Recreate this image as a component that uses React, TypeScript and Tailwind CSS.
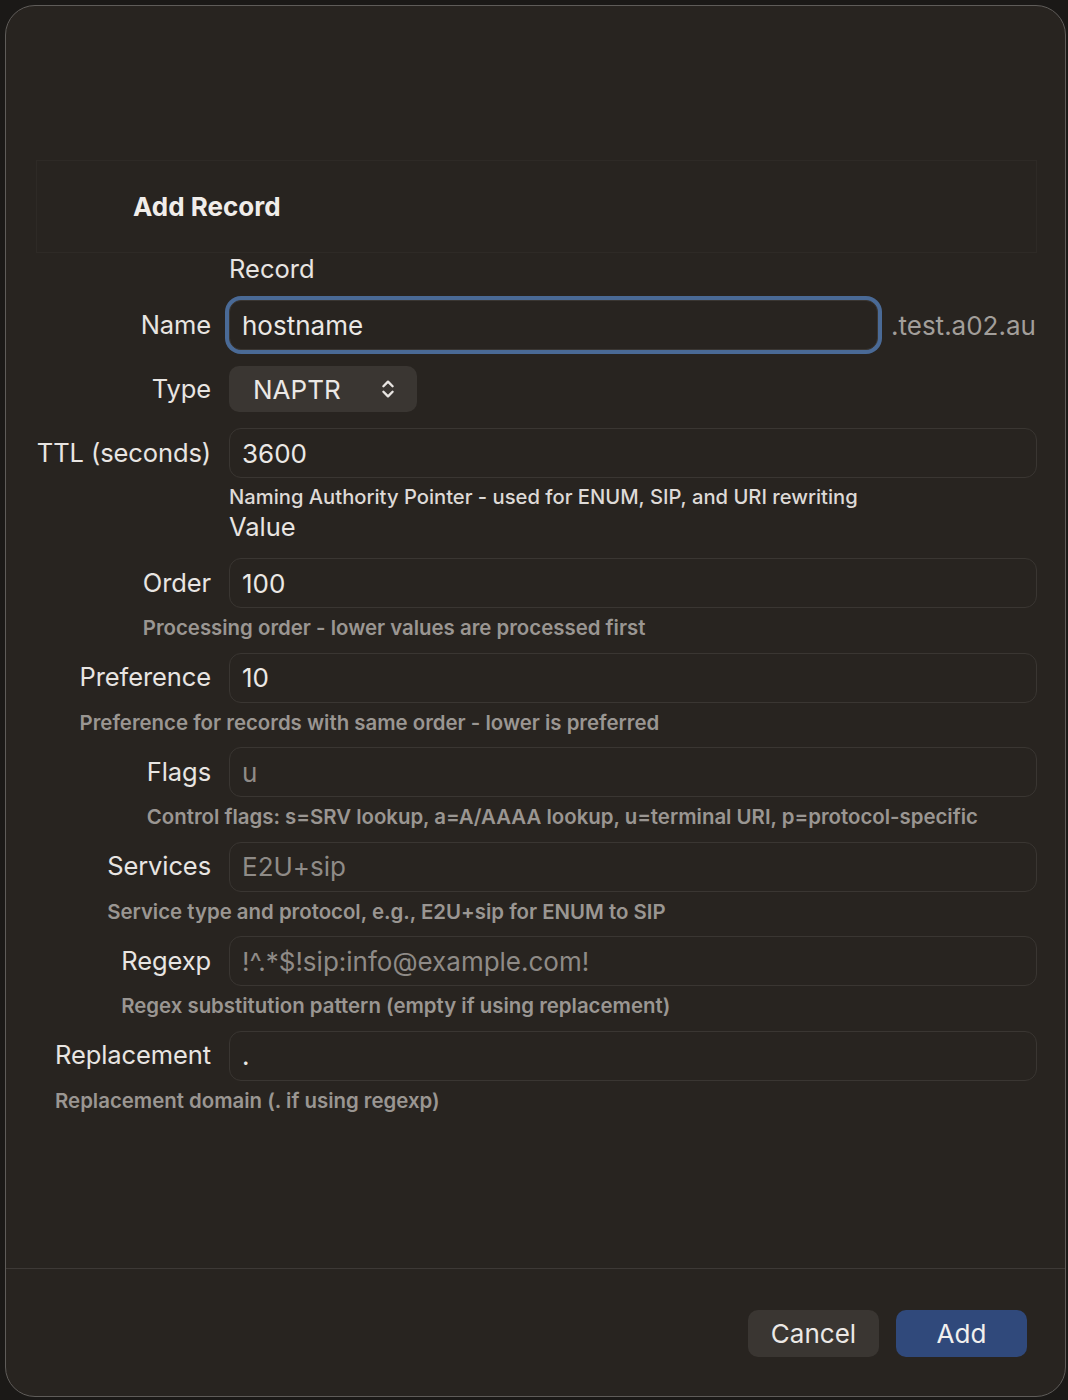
import { ChevronsUpDown } from "lucide-react";

const font = { fontFamily: "Inter, 'Noto Sans', sans-serif" };

type Field = {
  label: string;
  value?: string;
  placeholder?: string;
  help: string;
};

const valueFields: Field[] = [
  { label: "Order", value: "100", help: "Processing order - lower values are processed first" },
  { label: "Preference", value: "10", help: "Preference for records with same order - lower is preferred" },
  { label: "Flags", placeholder: "u", help: "Control flags: s=SRV lookup, a=A/AAAA lookup, u=terminal URI, p=protocol-specific" },
  { label: "Services", placeholder: "E2U+sip", help: "Service type and protocol, e.g., E2U+sip for ENUM to SIP" },
  { label: "Regexp", placeholder: "!^.*$!sip:info@example.com!", help: "Regex substitution pattern (empty if using replacement)" },
  { label: "Replacement", value: ".", help: "Replacement domain (. if using regexp)" },
];

function TextBox({ value, placeholder }: { value?: string; placeholder?: string }) {
  return (
    <div className="h-[50px] w-full rounded-[12px] border border-[#3a3632] bg-[#282420] pl-[12px] flex items-center text-[26px]">
      {value ? (
        <span className="text-[#ebe8e5]">{value}</span>
      ) : (
        <span className="text-[#8f8b87]">{placeholder}</span>
      )}
    </div>
  );
}

function Row({ label, children, h = 50 }: { label: string; children: React.ReactNode; h?: number }) {
  return (
    <div className="flex gap-[18px]">
      <div className="w-[175px] shrink-0 flex justify-end">
        <div
          className={`${h === 46 ? "h-[46px]" : "h-[50px]"} flex items-center whitespace-nowrap text-[25.5px] tracking-[-0.1px] text-[#e8e5e2]`}
        >
          {label}
        </div>
      </div>
      <div className="flex-1 min-w-0">{children}</div>
    </div>
  );
}

function ValueRow({ f, first }: { f: Field; first: boolean }) {
  return (
    <div className={`flex gap-[18px] ${first ? "mt-[15px]" : "mt-[12.5px]"}`}>
      <div className="w-[175px] shrink-0 flex justify-end">
        <div className="w-fit">
          <div className="h-[50px] flex items-center whitespace-nowrap text-[25.5px] tracking-[-0.1px] text-[#e8e5e2]">
            {f.label}
          </div>
          <div className="w-0 mt-[8px] h-[24px] leading-[24px] whitespace-nowrap text-[20.4px] font-semibold text-[#9a9692]">
            {f.help}
          </div>
        </div>
      </div>
      <div className="flex-1 min-w-0">
        <TextBox value={f.value} placeholder={f.placeholder} />
      </div>
    </div>
  );
}

export default function App() {
  return (
    <div className="w-[1068px] h-[1400px] bg-[#1b1917] pt-[5px] pl-[5px]" style={font}>
      <div className="w-[1061px] h-[1392px] rounded-[30px] border border-[#5f5c59] bg-[#282420] flex flex-col overflow-hidden">
        <div className="ml-[30px] mr-[28px] mt-[154px] h-[93px] border border-[#2e2a26] bg-[#282420] flex items-center pl-[96px]">
          <h1 className="text-[26px] font-bold text-[#f0edea]">Add Record</h1>
        </div>

        <div className="ml-[30px] mr-[28px]">
          <div className="flex gap-[18px]">
            <div className="w-[175px] shrink-0" />
            <div className="h-[32px] flex items-center text-[25.5px] text-[#e8e5e2]">Record</div>
          </div>

          <div className="mt-[15px]">
            <Row label="Name">
              <div className="flex items-center gap-[13px]">
                <div className="w-[649px] h-[50px] rounded-[12px] border border-[#3a3632] ring-[4px] ring-[#4a6a96] bg-[#282420] pl-[12px] flex items-center text-[26px] text-[#ebe8e5]">
                  hostname
                </div>
                <span className="text-[26px] text-[#a29e9a] whitespace-nowrap">.test.a02.au</span>
              </div>
            </Row>
          </div>

          <div className="mt-[16px]">
            <Row label="Type" h={46}>
              <div className="w-[188px] h-[46px] rounded-[10px] bg-[#3a3632] flex items-center justify-between pl-[24px] pr-[18px] text-[26px] text-[#ebe8e5]">
                <span>NAPTR</span>
                <ChevronsUpDown size={22} strokeWidth={2.6} className="text-[#e8e5e2]" />
              </div>
            </Row>
          </div>

          <div className="mt-[16px]">
            <Row label="TTL (seconds)">
              <TextBox value="3600" />
            </Row>
          </div>

          <div className="flex gap-[18px]">
            <div className="w-[175px] shrink-0" />
            <div className="flex-1">
              <div className="mt-[7px] h-[24px] leading-[24px] text-[20.2px] font-medium text-[#dedad7] whitespace-nowrap">
                Naming Authority Pointer - used for ENUM, SIP, and URI rewriting
              </div>
              <div className="mt-[2px] h-[32px] flex items-center text-[25.5px] text-[#e8e5e2]">Value</div>
            </div>
          </div>

          {valueFields.map((f, i) => (
            <ValueRow key={f.label} f={f} first={i === 0} />
          ))}
        </div>

        <div className="flex-1" />

        <div className="h-[128px] border-t border-[#3d3936] flex justify-end items-start pt-[41px] pr-[38px] gap-[17px]">
          <button className="w-[131px] h-[47px] rounded-[10px] bg-[#3a3632] text-[26px] text-[#ebe8e5]">
            Cancel
          </button>
          <button className="w-[131px] h-[47px] rounded-[10px] bg-[#30497b] text-[26px] text-[#f2f0ee]">
            Add
          </button>
        </div>
      </div>
    </div>
  );
}
